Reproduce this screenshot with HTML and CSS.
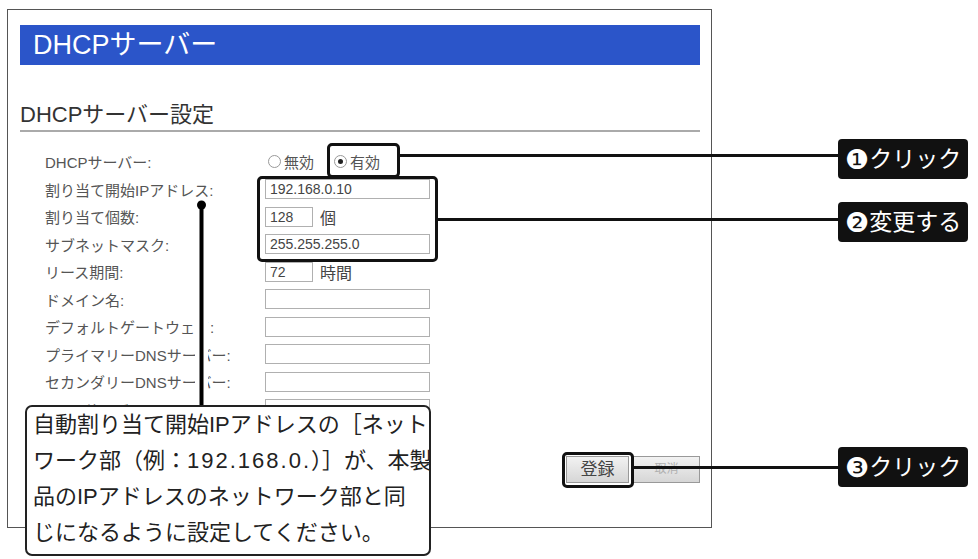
FILE: index.html
```html
<!DOCTYPE html>
<html>

	<head>
		<meta charset="UTF-8">
		<title>DHCPサーバー</title>
		<link rel="stylesheet" href="styles.css">
	</head>

	<body>
		<div class="stage">
			<div class="frame">
				<div class="titlebar">DHCPサーバー</div>
				<h2 class="section">DHCPサーバー設定</h2>
				<!--設定項目-->
				<div class="form">
					<div class="label">DHCPサーバー:</div>
					<div class="field"><span class="radio"></span>無効<span class="radio on"></span>有効</div>

					<div class="label">割り当て開始IPアドレス:</div>
					<div class="field"><span class="box">192.168.0.10</span></div>

					<div class="label">割り当て個数:</div>
					<div class="field"><span class="box small">128</span><span class="unit">個</span></div>

					<div class="label">サブネットマスク:</div>
					<div class="field"><span class="box">255.255.255.0</span></div>

					<div class="label">リース期間:</div>
					<div class="field"><span class="box small">72</span><span class="unit">時間</span></div>

					<div class="label">ドメイン名:</div>
					<div class="field"><span class="box"></span></div>

					<div class="label">デフォルトゲートウェイ:</div>
					<div class="field"><span class="box"></span></div>

					<div class="label">プライマリーDNSサーバー:</div>
					<div class="field"><span class="box"></span></div>

					<div class="label">セカンダリーDNSサーバー:</div>
					<div class="field"><span class="box"></span></div>

					<div class="label">WINSサーバー:</div>
					<div class="field"><span class="box"></span></div>
				</div>
				<!--ボタン-->
				<div class="buttons">
					<span class="btn">登録</span>
					<span class="btn faint">取消</span>
				</div>
			</div>

			<!--説明の線と枠-->
			<div class="mark mark-radio"></div>
			<div class="mark mark-fields"></div>
			<div class="mark mark-save"></div>

			<div class="hline line1"></div>
			<div class="hline line2"></div>
			<div class="hline line3"></div>

			<div class="tag tag1"><span class="no">❶</span>クリック</div>
			<div class="tag tag2"><span class="no">❷</span>変更する</div>
			<div class="tag tag3"><span class="no">❸</span>クリック</div>

			<!--吹き出しへの引き出し線-->
			<svg class="pin" width="20" height="212" viewBox="0 0 20 212">
				<rect x="3" y="6" width="13" height="206" fill="#fff" />
				<rect x="7.5" y="6" width="4" height="206" fill="#000" />
				<circle cx="9.5" cy="7" r="4.5" fill="#000" />
			</svg>

			<div class="note">
				<p>自動割り当て開始IPアドレスの［ネット</p>
				<p>ワーク部（例：<span class="num">192.168.0.</span>）］が、本製</p>
				<p>品のIPアドレスのネットワーク部と同</p>
				<p>じになるように設定してください。</p>
			</div>
		</div>
	</body>

</html>
```

FILE: styles.css
```css
* {
	margin: 0;
	padding: 0;
	box-sizing: border-box;
}

body {
	background: #fff;
	font-family: "Liberation Sans", "Noto Sans CJK JP", sans-serif;
	color: #333;
}

.stage {
	width: 978px;
	height: 559px;
	position: relative;
	overflow: hidden;
}

/* 画面の枠 */
.frame {
	width: 705px;
	height: 519px;
	margin: 9px 0 0 7px;
	border: 1px solid #555;
	padding: 15px 11px 0 12px;
}

.titlebar {
	height: 40px;
	line-height: 40px;
	background-color: #2b55c9;
	color: #fff;
	font-size: 27px;
	padding-left: 13px;
}

.section {
	margin-top: 37px;
	font-size: 22px;
	font-weight: normal;
	line-height: 25px;
	color: #333;
	padding-bottom: 3px;
	border-bottom: 2px solid #aaa;
}

.form {
	margin: 16px 0 0 25px;
	display: grid;
	grid-template-columns: 220px 1fr;
	grid-auto-rows: 27.5px;
	align-items: center;
	font-size: 15px;
	color: #555;
}

.label {
	white-space: nowrap;
}

.field {
	display: flex;
	align-items: center;
}

.box {
	width: 165px;
	height: 20px;
	border: 1px solid #b0b0b0;
	padding-left: 4px;
	line-height: 18px;
	color: #444;
	font-size: 14px;
}

.box.small {
	width: 48px;
}

.unit {
	margin-left: 7px;
	color: #444;
	font-size: 16px;
}

.radio {
	width: 13px;
	height: 13px;
	border: 1px solid #999;
	border-radius: 50%;
	margin: 0 3px 0 3px;
	position: relative;
}

.radio.on {
	margin-left: 20px;
}

.radio.on::after {
	content: "";
	position: absolute;
	left: 3px;
	top: 3px;
	width: 5px;
	height: 5px;
	border-radius: 50%;
	background-color: #222;
}

.buttons {
	margin-top: 33px;
	display: flex;
	justify-content: flex-end;
	gap: 4px;
}

.btn {
	width: 63px;
	height: 27px;
	line-height: 25px;
	text-align: center;
	font-size: 17px;
	color: #444;
	background: linear-gradient(#f2f2f2, #d6d6d6);
	border: 1px solid #999;
}

.btn.faint {
	width: 67px;
	color: #b0b0b0;
	font-size: 12px;
}

/* 説明の線と枠 */
.mark {
	position: absolute;
	border: 3px solid #111;
	border-radius: 5px;
}

.mark-radio {
	left: 327px;
	top: 143px;
	width: 73px;
	height: 35px;
}

.mark-fields {
	left: 257px;
	top: 176px;
	width: 181px;
	height: 86px;
}

.mark-save {
	left: 562px;
	top: 452px;
	width: 72px;
	height: 36px;
}

.hline {
	position: absolute;
	height: 3px;
	background-color: #111;
}

.line1 {
	left: 400px;
	top: 154px;
	width: 440px;
}

.line2 {
	left: 438px;
	top: 218px;
	width: 402px;
}

.line3 {
	left: 634px;
	top: 466px;
	width: 206px;
}

.tag {
	position: absolute;
	left: 838px;
	width: 130px;
	height: 40px;
	line-height: 40px;
	padding-left: 7px;
	background-color: #111;
	border-radius: 4px;
	color: #fff;
	font-size: 23px;
	white-space: nowrap;
}

.tag .no {
	font-family: "DejaVu Sans", sans-serif;
	font-size: 27px;
	vertical-align: -2px;
}

.tag1 {
	top: 139px;
}

.tag2 {
	top: 202px;
}

.tag3 {
	top: 447px;
}

.pin {
	position: absolute;
	left: 192px;
	top: 198px;
}

.note {
	position: absolute;
	left: 25px;
	top: 405px;
	width: 406px;
	height: 151px;
	background-color: #fff;
	border: 2px solid #222;
	border-radius: 7px;
	padding: 0 0 0 6px;
	font-size: 22px;
	line-height: 36px;
	color: #222;
	white-space: nowrap;
}

.note .num {
	letter-spacing: 2px;
}
```
